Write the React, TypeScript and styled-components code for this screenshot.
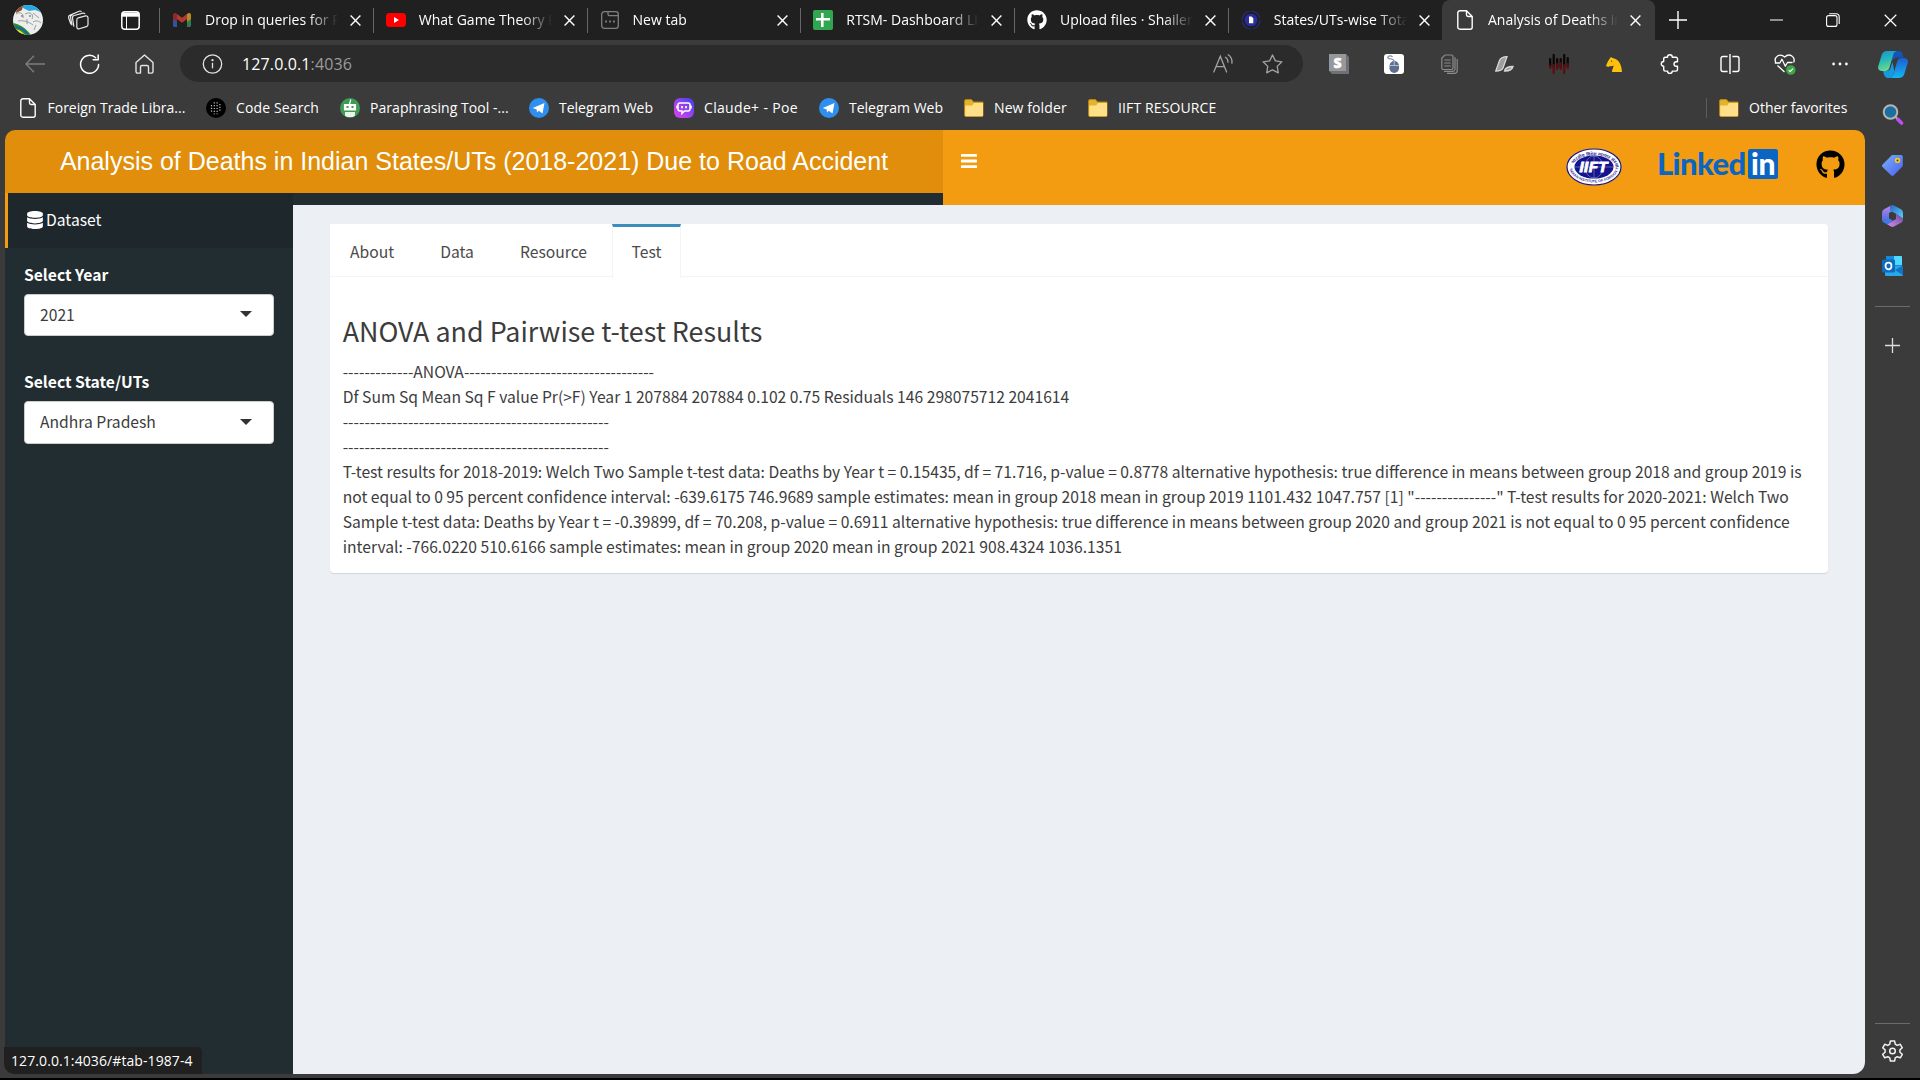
import React from "react";
import styled, { createGlobalStyle } from "styled-components";
import { FaGithub, FaDatabase } from "react-icons/fa";

const UI = `"Open Sans", "Noto Sans", sans-serif`;
const CONTENT = `"Noto Sans CJK SC", "Noto Sans", sans-serif`;

const Global = createGlobalStyle`
  * { box-sizing: border-box; }
  html, body { margin: 0; padding: 0; background: #000; overflow: hidden; }
  svg { display: block; flex: none; }
`;

const Frame = styled.div`
  width: 1920px;
  height: 1080px;
  display: flex;
  flex-direction: column;
  background: #3b3b3b;
  border-bottom: 2px solid #000;
  font-family: ${UI};
  color: #fff;
  overflow: hidden;
`;

/* ---------- tab strip ---------- */
const TabStrip = styled.div`
  height: 40px;
  flex: none;
  display: flex;
  background: #202020;
`;
const StripLead = styled.div`
  width: 159px;
  flex: none;
  display: flex;
  align-items: center;
  padding-left: 13px;
`;
const Avatar = styled.div`
  width: 30px;
  height: 30px;
  border-radius: 50%;
  overflow: hidden;
  margin-right: 24px;
`;
const LeadIcon = styled.div<{ $gap?: number }>`
  margin-right: ${(p) => p.$gap ?? 0}px;
`;
const Tab = styled.div<{ $active?: boolean }>`
  width: 213.75px;
  flex: none;
  height: 40px;
  display: flex;
  align-items: center;
  padding: 0 ${(p) => (p.$active ? 14 : 12)}px 0 ${(p) => (p.$active ? 12.5 : 12)}px;
  background: ${(p) => (p.$active ? "#3b3b3b" : "transparent")};
  border-radius: 8px 8px 0 0;
`;
const TabRule = styled.div<{ $hidden?: boolean }>`
  width: 1px;
  height: 25px;
  margin: 0 0 0 -12px;
  background: ${(p) => (p.$hidden ? "transparent" : "#666")};
`;
const TabIcon = styled.div`
  width: 20px;
  height: 20px;
  flex: none;
  margin: 0 13px 0 12px;
  display: flex;
  align-items: center;
  justify-content: center;
`;
const TabTitle = styled.div`
  flex: 1;
  min-width: 0;
  font-size: 14px;
  line-height: 20px;
  white-space: nowrap;
  overflow: hidden;
  mask-image: linear-gradient(90deg, #000 calc(100% - 30px), transparent);
`;
const TabClose = styled.div`
  width: 11px;
  flex: none;
  margin: 1px 0 0 12px;
`;
const NewTab = styled.div`
  width: 45px;
  display: flex;
  align-items: center;
  justify-content: center;
`;
const WindowButtons = styled.div`
  margin-left: auto;
  display: flex;
`;
const WindowButton = styled.div`
  width: 57.2px;
  padding-right: 1.5px;
  display: flex;
  align-items: center;
  justify-content: center;
`;

/* ---------- body ---------- */
const Body = styled.div`
  flex: 1;
  display: flex;
  min-height: 0;
`;
const MainColumn = styled.div`
  width: 1865px;
  flex: none;
  display: flex;
  flex-direction: column;
`;
const Toolbar = styled.div`
  height: 48px;
  flex: none;
  display: flex;
  align-items: center;
  padding-left: 7px;
`;
const ToolCell = styled.div`
  width: 55px;
  flex: none;
  display: flex;
  justify-content: center;
  align-items: center;
`;
const AddressBar = styled.div`
  width: 1123px;
  height: 37px;
  margin: -1px 8.5px 0 8px;
  border-radius: 19px;
  background: #2b2b2b;
  display: flex;
  align-items: center;
  padding: 0 20px 0 22px;
  flex: none;
`;
const Url = styled.div`
  margin-left: 19px;
  flex: 1;
  font-size: 16px;
  line-height: 24px;
  letter-spacing: 0.12px;
  color: #9b9b9b;
  b { font-weight: 400; color: #fff; }
`;
const StarSlot = styled.div`
  margin-left: 29px;
`;
const ToolRule = styled.div`
  width: 1px;
  height: 20px;
  background: #636363;
  margin: 0 3.5px 0 2px;
`;

const Favorites = styled.div`
  height: 42px;
  flex: none;
  display: flex;
  align-items: center;
  padding: 0 0 2px 20px;
`;
const Fav = styled.div<{ $w: number; $ls?: number; $gap?: number }>`
  width: ${(p) => p.$w}px;
  flex: none;
  display: flex;
  align-items: center;
  gap: ${(p) => p.$gap ?? 10}px;
  font-size: 14px;
  line-height: 20px;
  white-space: nowrap;
  letter-spacing: ${(p) => p.$ls ?? 0}px;
`;
const FavRule = styled.div`
  width: 1px;
  height: 20px;
  background: #5c5c5c;
  margin: 0 12px 0 auto;
`;

/* ---------- edge side bar ---------- */
const EdgeBar = styled.div`
  flex: 1;
  display: flex;
  flex-direction: column;
  align-items: center;
`;
const EdgeItem = styled.div<{ $h: number }>`
  height: ${(p) => p.$h}px;
  flex: none;
  display: flex;
  align-items: center;
  justify-content: center;
`;
const EdgeRule = styled.div`
  width: 35px;
  height: 1px;
  background: #6b6b6b;
  flex: none;
`;
const EdgeSpacer = styled.div`
  flex: 1;
`;

/* ---------- dashboard ---------- */
const Page = styled.div`
  margin-left: 5px;
  height: 944px;
  flex: none;
  border-radius: 10px 10px 12px 12px;
  overflow: hidden;
  background: #222d32;
  display: flex;
  flex-direction: column;
  font-family: ${CONTENT};
`;
const Header = styled.div`
  height: 75px;
  flex: none;
  display: flex;
`;
const Brand = styled.div`
  width: 938px;
  height: 63px;
  flex: none;
  background: #e08e0b;
  font: 25px/62px "Liberation Sans", Arial, sans-serif;
  text-align: center;
  white-space: nowrap;
`;
const Navbar = styled.div`
  flex: 1;
  background: #f39c12;
  display: flex;
  padding: 18px 20px 0 18px;
`;
const MenuToggle = styled.div`
  padding-top: 6px;
  width: 604.5px;
`;
const LinkedInMark = styled.div`
  display: flex;
  margin: 1px 0 0 35.5px;
  font-family: Lato, sans-serif;
  font-weight: 900;
  font-size: 31px;
  line-height: 28px;
  color: #0a66c2;
`;
const LinkedWord = styled.span`
  width: 91px;
  letter-spacing: -0.6px;
  white-space: nowrap;
`;
const InBox = styled.span`
  width: 30px;
  height: 30px;
  border-radius: 2.5px;
  background: #0a66c2;
  color: #fff;
  text-align: center;
  letter-spacing: -0.5px;
  font-size: 30px;
`;
const GithubSlot = styled.div`
  margin: 1.5px 0 0 38px;
`;

const Work = styled.div`
  flex: 1;
  display: flex;
  align-items: flex-start;
`;
const SideBar = styled.div`
  width: 288px;
  flex: none;
  margin-top: -12px;
`;
const SideItem = styled.div`
  height: 55px;
  background: #1e282c;
  border-left: 3px solid #f39c12;
  display: flex;
  align-items: center;
  gap: 2px;
  padding: 0 0 2px 18px;
  font-size: 15.67px;
`;
const Field = styled.div<{ $top: number }>`
  padding: ${(p) => p.$top}px 19px 0;
`;
const FieldLabel = styled.div`
  font-weight: 700;
  font-size: 15.67px;
  line-height: 25px;
  margin-bottom: 7px;
`;
const Select = styled.div<{ $h: number }>`
  height: ${(p) => p.$h}px;
  background: #fff;
  border: 1px solid #ccc;
  border-radius: 4px;
  color: #3c3c3c;
  display: flex;
  align-items: center;
  justify-content: space-between;
  padding: 0 21px 2px 15px;
  font-size: 15.67px;
  line-height: 25px;
`;
const Caret = styled.div`
  border: 6px solid transparent;
  border-top-color: #333;
  border-bottom: 0;
`;
const Content = styled.div`
  flex: 1;
  align-self: stretch;
  background: #ecf0f5;
  padding: 19px 37px 0;
`;
const TabBox = styled.div`
  background: #fff;
  border-radius: 4px;
  height: 349px;
  box-shadow: 0 1px 1px rgba(0, 0, 0, 0.12);
  color: #3c3c3c;
`;
const NavTabs = styled.div`
  height: 53px;
  display: flex;
  border-bottom: 1px solid #f4f4f4;
`;
const NavTab = styled.div<{ $w: number; $active?: boolean }>`
  width: ${(p) => p.$w}px;
  height: ${(p) => (p.$active ? 54 : 52)}px;
  text-align: center;
  font-size: 15.67px;
  line-height: 25px;
  padding-top: ${(p) => (p.$active ? 12 : 15)}px;
  border-top: ${(p) => (p.$active ? "3px solid #3c8dbc" : "0")};
  border-left: 1px solid ${(p) => (p.$active ? "#f4f4f4" : "transparent")};
  border-right: 1px solid ${(p) => (p.$active ? "#f4f4f4" : "transparent")};
  background: #fff;
  color: #4a4a4a;
`;
const TabGap = styled.div`
  width: 5px;
`;
const Pane = styled.div`
  padding: 35px 13px 0 12.7px;
`;
const Title = styled.h3`
  margin: 0 0 9px;
  font-weight: 400;
  font-size: 26.86px;
  line-height: 38px;
`;
const Line = styled.div`
  font-size: 15.67px;
  line-height: 25px;
  white-space: nowrap;
  width: max-content;
`;
const StatusBubble = styled.div`
  position: absolute;
  left: 4px;
  top: 1047px;
  width: 198px;
  height: 27px;
  border-radius: 0 5px 0 10px;
  background: #202020;
  padding-left: 7px;
  font-size: 14px;
  line-height: 27px;
  letter-spacing: 0.09px;
  white-space: nowrap;
`;

/* ---------- icons ---------- */
const X = ({ s = 11, w = 1.4 }: { s?: number; w?: number }) => (
  <svg width={s} height={s} viewBox="0 0 11 11" stroke="#fff" strokeWidth={w}><path d="M.6.6 10.4 10.4M10.4.6.6 10.4" /></svg>
);
const PageIcon = () => (
  <svg width="16" height="20" viewBox="0 0 16 20" fill="none" stroke="#fff" strokeWidth="1.4" strokeLinejoin="round">
    <path d="M3 .8h6.500L15.200 6.500V17.200a2 2 0 0 1-2 2H2.800a2 2 0 0 1-2-2V2.800a2 2 0 0 1 2-2zM9.500.8v4a1.700 1.700 0 0 0 1.700 1.700h4" />
  </svg>
);
const AvatarArt = () => (
  <svg width="30" height="30" viewBox="0 0 30 30">
    <rect width="30" height="30" fill="#eceeee" />
    <path d="M8 0h18l4 8-8-3-6 1-6-3z" fill="#28a8e0" /><path d="M4 0h6l-1 5-6 3z" fill="#8a4a30" />
    <path d="M0 18c6 1 12 4 18 12H0z" fill="#2f8a2a" /><path d="M0 24c5 0 9 2 12 6H0z" fill="#f1e32a" />
    <path d="M0 22c6 0 12 3 15 8" stroke="#185cc0" strokeWidth="1.5" fill="none" />
    <path d="M3 9c4-3 8 0 7 4M12 9c6-3 9 1 7 5M5 16c6-1 11 1 15 4M20 8l6 5M20 17c3-2 6-1 8 1M14 14v5M23 20l-2 5" stroke="#888" strokeWidth=".8" fill="none" />
    <circle cx="9" cy="11" r=".8" fill="#444" /><circle cx="17" cy="11" r=".8" fill="#444" />
  </svg>
);
const Workspaces = () => (
  <svg width="22" height="20" viewBox="0 0 22 20" fill="none" stroke="#e8e8e8" strokeWidth="1.2" strokeLinejoin="round" strokeLinecap="round">
    <path d="M11.300 7.800 18.500 5.900A2 2 0 0 1 21 7.800v6.700a2.200 2.200 0 0 1-1.600 2.100l-7.100 2.200a2 2 0 0 1-2.500-1.900V9.900a2.200 2.200 0 0 1 1.500-2.100z" />
    <path d="M6.800 16.200 5.500 8.200a2.400 2.400 0 0 1 1.700-2.700l8.600-2.300a2 2 0 0 1 2 .5M3.800 14 1.700 8a2.400 2.400 0 0 1 1.500-2.900l9-3.900a2 2 0 0 1 2 .2M4.900 14.800 3.600 7.700a2.400 2.400 0 0 1 1.600-2.700" />
  </svg>
);
const TabActions = () => (
  <svg width="19" height="19" viewBox="0 0 19 19" fill="none" stroke="#fff" strokeWidth="1.5">
    <rect x=".8" y=".8" width="17.4" height="17.4" rx="3" /><path d="M1 1.5h17v4.2H1z" fill="#fff" stroke="none" /><path d="M5.500 5v13" strokeWidth="1" />
  </svg>
);
const Gmail = () => (
  <svg width="18" height="14" viewBox="0 0 18 14">
    <path d="M0 2v10.800c0 .7.5 1.200 1.200 1.200H4V5z" fill="#33549a" /><path d="M18 2v10.800c0 .7-.5 1.200-1.200 1.200H14V5z" fill="#2f7d48" />
    <path d="M0 2C0 .2 1.800-.6 3.200.4L4 1v8L0 6z" fill="#8c2b2b" /><path d="M4 1v5l5 3.800L14 6V1L9 4.800z" fill="#b13a32" />
    <path d="M18 2c0-1.800-1.800-2.600-3.200-1.600L14 1v8l4-3z" fill="#b98a24" />
  </svg>
);
const YouTube = () => (
  <svg width="20" height="14" viewBox="0 0 20 14"><rect width="20" height="14" rx="3.4" fill="#f00" /><path d="M8 4v6l5-3z" fill="#fff" /></svg>
);
const NewTabIcon = () => (
  <svg width="18" height="18" viewBox="0 0 18 18" fill="none" stroke="#7f7f7f" strokeWidth="1.300">
    <rect x=".7" y=".7" width="16.600" height="16.600" rx="2.600" /><path d="M7 1v2a1.700 1.700 0 0 0 1.700 1.700H17" />
    <path d="M4.200 10.500h1.800M8.100 10.500h1.800M12 10.500h1.800" strokeWidth="1.800" />
  </svg>
);
const Sheets = () => (
  <svg width="20" height="20" viewBox="0 0 20 20"><rect width="20" height="20" rx="2" fill="#31a650" /><path d="M8 3h2.600v5H17v2.600h-6.400V17H8v-6.400H3V8h5z" fill="#fff" /></svg>
);
const StatesLogo = () => (
  <svg width="20" height="20" viewBox="0 0 20 20" fill="none">
    <circle cx="10" cy="10" r="9" stroke="#2a2a86" strokeWidth="1.200" strokeDasharray="12 2.100" /><circle cx="10" cy="10" r="6.300" fill="#2c2c9e" />
    <path d="M8 6.500h2.500L12.300 8.300v4.900H8z" fill="#fff" />
  </svg>
);
const Plus = ({ s, w, c = "#fff" }: { s: number; w: number; c?: string }) => (
  <svg width={s} height={s} viewBox={`0 0 ${s} ${s}`} stroke={c} strokeWidth={w}><path d={`M${s / 2} 0V${s}M0 ${s / 2}H${s}`} /></svg>
);
const Restore = () => (
  <svg width="14" height="14" viewBox="0 0 14 14" fill="none" stroke="#fff" strokeWidth="1.100"><rect x=".6" y="2.600" width="10.400" height="10.800" rx="2" /><path d="M3.200.8h6.800a3.200 3.200 0 0 1 3.200 3.200v7" /></svg>
);
const Back = () => (
  <svg width="20" height="18" viewBox="0 0 20 18" fill="none" stroke="#7d7d7d" strokeWidth="1.400"><path d="M20 9H1M9 .8.900 9 9 17.200" /></svg>
);
const Refresh = () => (
  <svg width="21" height="20" viewBox="0 0 21 20" fill="none" stroke="#fff" strokeWidth="1.500" strokeLinecap="round" strokeLinejoin="round"><path d="M19.600 10.500a9 9 0 1 1-2.900-6.800M19.200.9v4.900h-5" /></svg>
);
const HomeIcon = () => (
  <svg width="19" height="20" viewBox="0 0 19 20" fill="none" stroke="#e4e4e4" strokeWidth="1.400" strokeLinejoin="round"><path d="M1 8.400 9.500.9 18 8.400V17.600a1.500 1.500 0 0 1-1.500 1.500h-3V13a1.500 1.500 0 0 0-1.500-1.500H7A1.500 1.500 0 0 0 5.500 13v6.100h-3A1.500 1.500 0 0 1 1 17.600z" /></svg>
);
const Info = () => (
  <svg width="21" height="20" viewBox="0 0 20 20" fill="none" stroke="#e4e4e4" strokeWidth="1.300"><circle cx="10" cy="10" r="9.200" /><path d="M10 8.800v5.500" /><circle cx="10" cy="6.200" r=".5" fill="#e4e4e4" /></svg>
);
const ReadAloud = () => (
  <svg width="20" height="19" viewBox="0 0 20 19" fill="none" stroke="#a3a3a3" strokeWidth="1.300" strokeLinecap="round"><path d="M.800 18 7.300 2.200 13.600 18M3 12.700h8.600M12.500 3.200c1.700 1 2.600 2.800 2.500 5M15.200.8c2.800 1.900 4.100 5 3.700 8.400" /></svg>
);
const Star = () => (
  <svg width="21" height="20" viewBox="0 0 21 20" fill="none" stroke="#a3a3a3" strokeWidth="1.300" strokeLinejoin="round"><path d="M10.500 1 13.400 6.900 19.900 7.800 15.200 12.400 16.300 18.800 10.500 15.800 4.700 18.800 5.800 12.400 1.100 7.800 7.600 6.900z" /></svg>
);
const SCube = () => (
  <svg width="20" height="20" viewBox="0 0 20 20"><path d="M0 0h17l3 3v17H3l-3-3z" fill="#6f7175" /><rect width="17" height="17" fill="#96989c" /><text x="8.500" y="13.600" fontSize="14" fontWeight="800" fontFamily="Open Sans" fill="#fff" stroke="#fff" strokeWidth=".5" textAnchor="middle">S</text></svg>
);
const MouseIcon = () => (
  <svg width="20" height="20" viewBox="0 0 20 20"><rect width="20" height="20" rx="3" fill="#fff" /><path d="M10.200 8C10.500 3.500 4.500 6 3.700 3.800 3.800 1.500 7.500 1.200 8.500 3" stroke="#8391a5" fill="none" strokeWidth="1.200" /><rect x="5.500" y="7" width="9.500" height="12" rx="4.700" fill="#5c6f8e" /><path d="M5.500 11.500h9.500M10.200 7v4" stroke="#dfe5ee" strokeWidth=".7" /></svg>
);
const Docs = () => (
  <svg width="17" height="20" viewBox="0 0 17 20" fill="none" stroke="#8b8b8b" strokeWidth="1.200"><path d="M4 1h6.500A1.500 1.500 0 0 1 12 2.500V14a1.500 1.500 0 0 1-1.500 1.500H2.300A1.500 1.500 0 0 1 .8 14V4zM14 3.200V15a2.300 2.300 0 0 1-2.300 2.300H3M16.200 5v11.500a2.800 2.800 0 0 1-2.800 2.800H6M3.200 6h6.500M3.200 9h6.500M3.200 12h6.500" /></svg>
);
const LeafMark = () => (
  <svg width="19" height="16" viewBox="0 0 19 16" fill="#9d9d9d" stroke="#d8d8d8" strokeWidth="1.300"><path d="M.8 15 4.500 4.500C5.500 2 8 .8 12 .7L8 12c-.9 2.300-3.200 3-7.200 3zM9.500 15c.6-3 3-4.500 8.500-4.500-1 3.500-3.500 4.700-8.500 4.500z" /></svg>
);
const Wave = () => (
  <svg width="20" height="20" viewBox="0 0 20 20" strokeWidth="2.200" strokeLinecap="round">
    <path d="M1.200 5v8M4.700 1v12M8.200 5v8M11.700 5v8M15.200 1v12M18.700 4v8" stroke="#0c0606" />
    <path d="M1.200 12v2M4.700 11v8M8.200 10v5M11.700 9v6M15.200 11v8M18.700 10v4" stroke="#5c0d10" />
  </svg>
);
const Knight = () => (
  <svg width="16" height="15" viewBox="0 0 16 15" fill="#fcc00d"><path d="M5 0l1.500 1C11.500 1.500 15.500 6 16 15H6c0-3 1.500-4.500 1.600-6.500C5.500 9.800 4 8.500 2.200 10L0 9C1 6 2.300 3 5 0z" /><circle cx="5.600" cy="4.200" r=".6" fill="#3b3b3b" /></svg>
);
const Puzzle = () => (
  <svg width="19" height="20" viewBox="0 0 19 20" fill="none" stroke="#fff" strokeWidth="1.400" strokeLinejoin="round"><path d="M7.500 3.200a2.400 2.400 0 0 1 4.800 0h3.700a1.500 1.500 0 0 1 1.500 1.500v3h-1.200a2.300 2.300 0 0 0 0 4.600h1.200v3.300a1.500 1.500 0 0 1-1.500 1.500h-3.700a2.400 2.400 0 0 1-4.800 0H5.200a1.500 1.500 0 0 1-1.500-1.500v-3.300a2.400 2.400 0 0 1 0-4.800v-2.800a1.500 1.500 0 0 1 1.500-1.500z" /></svg>
);
const Split = () => (
  <svg width="20" height="20" viewBox="0 0 20 20" fill="none" stroke="#fff" strokeWidth="1.400"><path d="M7.600 2.500H3A2 2 0 0 0 1 4.500v11a2 2 0 0 0 2 2h4.600M12.400 2.500H17a2 2 0 0 1 2 2v11a2 2 0 0 1-2 2h-4.600M10 0v20" /></svg>
);
const Heart = () => (
  <svg width="22" height="21" viewBox="0 0 22 21" fill="none" stroke="#fff" strokeWidth="1.300" strokeLinejoin="round">
    <path d="M1.700 8.500C-.5 3 5.800-1.500 10.700 3 15.500-1.500 22 3 19.600 8.500M3.500 11.500 10.500 18M.8 9h5l2.200-3.800 3.300 7L13.500 8.500h5" />
    <circle cx="16.800" cy="16" r="4.800" fill="#3fa648" stroke="none" /><path d="M14.700 16.100l1.500 1.500 2.700-3" strokeWidth="1.100" />
  </svg>
);
const Dots = () => (
  <svg width="16" height="4" viewBox="0 0 16 4" fill="#fff"><circle cx="1.600" cy="2" r="1.400" /><circle cx="8" cy="2" r="1.400" /><circle cx="14.400" cy="2" r="1.400" /></svg>
);
const Copilot = () => (
  <svg width="30" height="27" viewBox="0 0 30 27">
    <defs>
      <linearGradient id="cpa" x1="0" y1="0" x2=".3" y2="1"><stop offset="0" stopColor="#1e8fd6" /><stop offset=".5" stopColor="#25b7b9" /><stop offset="1" stopColor="#6fd98a" /></linearGradient>
      <linearGradient id="cpb" x1="0" y1="0" x2="0" y2="1"><stop offset="0" stopColor="#1b5fd0" /><stop offset="1" stopColor="#17b4f5" /></linearGradient>
    </defs>
    <path d="M17 0h4c2 0 3 1 3.600 3l1 3.500h-6c-3 0-4.500 1.500-5.300 4L12 3z" fill="#1554b8" />
    <path d="M9 0h9.500c-2 .8-2.800 2-3.500 4.500l-3.500 12c-.7 2.400-2 3.500-4.500 3.500H4c-3 0-4.500-2-3.700-5L3.500 4.500C4.400 1.500 6 0 9 0z" fill="url(#cpa)" />
    <path d="M20.500 27H12c2.300-1 3-2.200 3.700-4.500l3.500-12c.7-2.400 2-3.500 4.500-3.500H26c3 0 4.500 2 3.700 5L26.500 22.500c-.9 3-3 4.500-6 4.500z" fill="url(#cpb)" />
    <path d="M5 20h3c2.500 0 4-1 4.700-3.500L14.500 11l1.800 9-1 3.500C14.500 26 13.500 27 12 27h-2C7.500 27 6 25 5 20z" fill="#1699dd" />
  </svg>
);
const CodeSearch = () => (
  <svg width="20" height="20" viewBox="0 0 20 20"><circle cx="10" cy="10" r="10" fill="#000" /><g stroke="#bbb" strokeWidth="1.200" strokeDasharray="1.200 1.600"><path d="M5.500 7v7M8.300 4.300v12M11.100 4.300v12M13.900 6v8" /></g></svg>
);
const Robot = () => (
  <svg width="20" height="20" viewBox="0 0 20 20"><circle cx="10" cy="10" r="10" fill="#3f9a53" /><path d="M9.400 6.500 10.800 1.500M4.500 6.500h11v5.500h-11z" stroke="#fff" strokeWidth="1.200" fill="#fff" /><path d="M6.500 8h2v2h-2zM11.500 8h2v2h-2z" fill="#3f9a53" /><path d="M5 14h10v3.500l-2 1.500H7l-2-1.500z" fill="#e8f5ea" /></svg>
);
const Telegram = () => (
  <svg width="20" height="20" viewBox="0 0 20 20"><circle cx="10" cy="10" r="10" fill="#2f8fee" /><path d="M3.800 10 15.500 5l-2 10.500L9.800 12.800 8 14.600 7.700 11.500z" fill="#fff" /></svg>
);
const Poe = () => (
  <svg width="20" height="20" viewBox="0 0 20 20"><defs><linearGradient id="poe" x1="0" y1="1" x2="1" y2="0"><stop offset="0" stopColor="#e03ff0" /><stop offset=".5" stopColor="#9a42ef" /><stop offset="1" stopColor="#3c3ff0" /></linearGradient></defs><rect width="20" height="20" rx="6" fill="url(#poe)" /><path d="M6 5h8a2 2 0 0 1 2 2v4a2 2 0 0 1-2 2h-3.500L8 15.500V13H6a2 2 0 0 1-2-2V7a2 2 0 0 1 2-2zM3 7.500v3M17 7.500v3" fill="none" stroke="#fff" strokeWidth="1.500" /><path d="M8 8v2.200M12 8v2.200" stroke="#fff" strokeWidth="1.700" /></svg>
);
const Folder = () => (
  <svg width="20" height="18" viewBox="0 0 20 18"><path d="M.6 2A1.400 1.400 0 0 1 2 .6h5.500L9.500 3H19v13.400a1 1 0 0 1-1 1H1.600a1 1 0 0 1-1-1z" fill="#e5b22e" stroke="#b98710" strokeWidth="1" /><path d="M1.200 6.500h7L10 4h9v12.300a.9.900 0 0 1-.9.900H2a.9.900 0 0 1-.8-.9z" fill="#ffdf87" /></svg>
);
const SearchIcon = () => (
  <svg width="22" height="21" viewBox="0 0 22 21"><path d="M13.500 13 16 15.500" stroke="#b4b4b4" strokeWidth="2" /><path d="M16 15.500 19.500 19" stroke="#c44cf8" strokeWidth="3.600" strokeLinecap="round" /><circle cx="8.500" cy="8" r="6.800" fill="#1a6f9f" stroke="#b4b4b4" strokeWidth="2" /></svg>
);
const Tag = () => (
  <svg width="21" height="21" viewBox="0 0 21 21"><defs><linearGradient id="tg" x1="0" y1="0" x2="1" y2="1"><stop offset="0" stopColor="#7ab2f7" /><stop offset="1" stopColor="#4a5ff0" /></linearGradient></defs><path d="M10 0h9a1.800 1.800 0 0 1 1.800 1.800v8.500a2 2 0 0 1-.6 1.400l-8.400 8.600a2 2 0 0 1-2.800 0L.6 12a1.800 1.800 0 0 1 0-2.600z" fill="url(#tg)" /><circle cx="15.500" cy="5.400" r="2.700" fill="#f6cc16" /><circle cx="15.500" cy="5.400" r="1" fill="#3a3a60" /></svg>
);
const M365 = () => (
  <svg width="21" height="22" viewBox="0 0 21 22"><defs><linearGradient id="ma" x1="0" y1="0" x2="0" y2="1"><stop offset="0" stopColor="#c084e8" /><stop offset="1" stopColor="#3f6ddd" /></linearGradient><linearGradient id="mb" x1="0" y1="0" x2="1" y2="1"><stop offset="0" stopColor="#2a66c8" /><stop offset="1" stopColor="#5bd0f5" /></linearGradient><linearGradient id="mc" x1="0" y1="1" x2="1" y2="0"><stop offset="0" stopColor="#d58bf3" /><stop offset="1" stopColor="#6b4c98" /></linearGradient></defs>
    <path d="M9 .4 2 4.300Q0 5.500 0 8v7q0 1.500 1.500 2.400L7 17V8l3.500-2z" fill="url(#ma)" /><path d="M9 .4q1.500-.8 3 0L19 4.300Q21 5.500 21 8v5.500L14 9 8 6V1z" fill="url(#mb)" /><path d="M21 13.500v1q0 2-1.500 3L12 21.500q-1.500.8-3 0L5 19.200l9-5.200V9z" fill="url(#mc)" /><path d="M1.500 17.400 5 19.200 11 15.800 7 13z" fill="#3f7ae6" /><path d="M10.500 7 14 9v4l-3.500 2L7 13V9z" fill="#3b3b3b" />
  </svg>
);
const Outlook = () => (
  <svg width="21" height="20" viewBox="0 0 21 20"><path d="M4 0h15a1 1 0 0 1 1 1v10H4z" fill="#1a86d8" /><path d="M12 0h7a1 1 0 0 1 1 1v8h-8z" fill="#50d9ff" /><path d="M3 9.500 21 10v9a1 1 0 0 1-1 1H4a1 1 0 0 1-1-1z" fill="#28a8ea" /><path d="M21 9.500v9.700L13 14z" fill="#1272bf" /><rect y="3.500" width="13" height="13" rx="1.200" fill="#0f6cbd" /><ellipse cx="6.500" cy="10" rx="3" ry="3.300" fill="none" stroke="#fff" strokeWidth="1.700" /></svg>
);
const Gear = () => (
  <svg width="21" height="22" viewBox="0 0 21 22" fill="none" stroke="#f0f0f0" strokeWidth="1.500" strokeLinejoin="round"><path d="M8.400 1h4.200l.6 3.200 2 1.200 3.100-1.100 2 3.500-2.400 2.100v2.300l2.400 2.100-2 3.500-3.100-1.100-2 1.200-.6 3.100H8.400l-.6-3.100-2-1.200-3.100 1.100-2-3.500 2.400-2.100V9.900L.7 7.800l2-3.500 3.100 1.100 2-1.200z" /><circle cx="10.500" cy="11" r="2.800" /></svg>
);
const Burger = () => (
  <svg width="16" height="14" viewBox="0 0 16 14" fill="#fff"><rect width="16" height="2.800" rx=".6" /><rect y="5.600" width="16" height="2.800" rx=".6" /><rect y="11.200" width="16" height="2.800" rx=".6" /></svg>
);
const Iift = () => (
  <svg width="56" height="38" viewBox="0 0 56 38">
    <defs><path id="arcTop" d="M6.500 20A21.500 12.500 0 0 1 49.500 20" /><path id="arcBottom" d="M3.500 19A24.500 15.500 0 0 0 52.500 19" /></defs>
    <ellipse cx="28" cy="19" rx="27" ry="18" fill="#fff" stroke="#17178c" strokeWidth="1.200" />
    <ellipse cx="28" cy="19" rx="19.500" ry="11.500" fill="#14148c" />
    <ellipse cx="28" cy="19" rx="9" ry="11" fill="none" stroke="#8d8dd0" strokeWidth=".6" /><path d="M9 19h38M28 8v22" stroke="#8d8dd0" strokeWidth=".6" />
    <text fontSize="4.600" fontWeight="700" fontFamily="Noto Sans, sans-serif" fill="#3b3b9c"><textPath href="#arcTop" startOffset="4">भारतीय विदेश व्यापार संस्थान</textPath></text>
    <text fontSize="3.700" fontWeight="700" fontFamily="Liberation Sans" fill="#3b3b9c"><textPath href="#arcBottom" startOffset="2">INDIAN INSTITUTE OF FOREIGN TRADE</textPath></text>
    <text x="27.500" y="24.300" fontSize="15" fontWeight="700" fontStyle="italic" fontFamily="Liberation Sans" fill="#fff" stroke="#fff" strokeWidth=".9" textAnchor="middle" textLength="28">IIFT</text>
  </svg>
);

const tabs = [
  { icon: <Gmail />, title: "Drop in queries for R" },
  { icon: <YouTube />, title: "What Game Theory R" },
  { icon: <NewTabIcon />, title: "New tab" },
  { icon: <Sheets />, title: "RTSM- Dashboard Li" },
  { icon: <FaGithub size={20} color="#fff" />, title: "Upload files · Shailen" },
  { icon: <StatesLogo />, title: "States/UTs-wise Total" },
  { icon: <PageIcon />, title: "Analysis of Deaths in", active: true },
];
const favorites = [
  { icon: <PageIcon />, label: "Foreign Trade Libra...", w: 186, gap: 11.5 },
  { icon: <CodeSearch />, label: "Code Search", w: 134, ls: 0.13 },
  { icon: <Robot />, label: "Paraphrasing Tool -...", w: 189, ls: 0.05 },
  { icon: <Telegram />, label: "Telegram Web", w: 145 },
  { icon: <Poe />, label: "Claude+ - Poe", w: 145, ls: 0.33 },
  { icon: <Telegram />, label: "Telegram Web", w: 145 },
  { icon: <Folder />, label: "New folder", w: 124, ls: 0.1 },
  { icon: <Folder />, label: "IIFT RESOURCE", w: 140, ls: 0.12 },
];
const lines = [
  "-------------ANOVA-----------------------------------",
  "Df Sum Sq Mean Sq F value Pr(>F) Year 1 207884 207884 0.102 0.75 Residuals 146 298075712 2041614",
  "-------------------------------------------------",
  "-------------------------------------------------",
  "T-test results for 2018-2019: Welch Two Sample t-test data: Deaths by Year t = 0.15435, df = 71.716, p-value = 0.8778 alternative hypothesis: true difference in means between group 2018 and group 2019 is",
  'not equal to 0 95 percent confidence interval: -639.6175 746.9689 sample estimates: mean in group 2018 mean in group 2019 1101.432 1047.757 [1] "---------------" T-test results for 2020-2021: Welch Two',
  "Sample t-test data: Deaths by Year t = -0.39899, df = 70.208, p-value = 0.6911 alternative hypothesis: true difference in means between group 2020 and group 2021 is not equal to 0 95 percent confidence",
  "interval: -766.0220 510.6166 sample estimates: mean in group 2020 mean in group 2021 908.4324 1036.1351",
];

export default function App() {
  return (
    <Frame>
      <Global />
      <TabStrip>
        <StripLead>
          <Avatar><AvatarArt /></Avatar>
          <LeadIcon $gap={32}><Workspaces /></LeadIcon>
          <LeadIcon><TabActions /></LeadIcon>
        </StripLead>
        {tabs.map((t, i) => (
          <Tab key={i} $active={t.active}>
            <TabRule $hidden={t.active} />
            <TabIcon>{t.icon}</TabIcon>
            <TabTitle>{t.title}</TabTitle>
            <TabClose><X /></TabClose>
          </Tab>
        ))}
        <NewTab><Plus s={18} w={1.4} /></NewTab>
        <WindowButtons>
          <WindowButton><svg width="13" height="2"><path d="M0 1h13" stroke="#fff" /></svg></WindowButton>
          <WindowButton><Restore /></WindowButton>
          <WindowButton><X s={13} w={1} /></WindowButton>
        </WindowButtons>
      </TabStrip>
      <Body>
        <MainColumn>
          <Toolbar>
            <ToolCell><Back /></ToolCell>
            <ToolCell><Refresh /></ToolCell>
            <ToolCell><HomeIcon /></ToolCell>
            <AddressBar>
              <Info />
              <Url><b>127.0.0.1</b>:4036</Url>
              <ReadAloud />
              <StarSlot><Star /></StarSlot>
            </AddressBar>
            <ToolCell><SCube /></ToolCell>
            <ToolCell><MouseIcon /></ToolCell>
            <ToolCell><Docs /></ToolCell>
            <ToolCell><LeafMark /></ToolCell>
            <ToolCell><Wave /></ToolCell>
            <ToolCell><Knight /></ToolCell>
            <ToolCell><Puzzle /></ToolCell>
            <ToolRule />
            <ToolCell><Split /></ToolCell>
            <ToolCell><Heart /></ToolCell>
            <ToolCell><Dots /></ToolCell>
          </Toolbar>
          <Favorites>
            {favorites.map((f, i) => (
              <Fav key={i} $w={f.w} $gap={f.gap} $ls={f.ls}>{f.icon}{f.label}</Fav>
            ))}
            <FavRule />
            <Fav $w={146}><Folder />Other favorites</Fav>
          </Favorites>
          <Page>
            <Header>
              <Brand>Analysis of Deaths in Indian States/UTs (2018-2021) Due to Road Accident</Brand>
              <Navbar>
                <MenuToggle><Burger /></MenuToggle>
                <Iift />
                <LinkedInMark><LinkedWord>Linked</LinkedWord><InBox>in</InBox></LinkedInMark>
                <GithubSlot><FaGithub size={29} color="#000" /></GithubSlot>
              </Navbar>
            </Header>
            <Work>
              <SideBar>
                <SideItem><FaDatabase size={18} />Dataset</SideItem>
                <Field $top={14}>
                  <FieldLabel>Select Year</FieldLabel>
                  <Select $h={42}>2021<Caret /></Select>
                </Field>
                <Field $top={33}>
                  <FieldLabel>Select State/UTs</FieldLabel>
                  <Select $h={43}>Andhra Pradesh<Caret /></Select>
                </Field>
              </SideBar>
              <Content>
                <TabBox>
                  <NavTabs>
                    <NavTab $w={84}>About</NavTab>
                    <NavTab $w={86}>Data</NavTab>
                    <NavTab $w={107}>Resource</NavTab>
                    <TabGap />
                    <NavTab $w={69} $active>Test</NavTab>
                  </NavTabs>
                  <Pane>
                    <Title>ANOVA and Pairwise t-test Results</Title>
                    {lines.map((l, i) => <Line key={i}>{l}</Line>)}
                  </Pane>
                </TabBox>
              </Content>
            </Work>
          </Page>
        </MainColumn>
        <EdgeBar>
          <EdgeItem $h={48}><Copilot /></EdgeItem>
          <EdgeItem $h={53}><SearchIcon /></EdgeItem>
          <EdgeItem $h={49}><Tag /></EdgeItem>
          <EdgeItem $h={51}><M365 /></EdgeItem>
          <EdgeItem $h={50}><Outlook /></EdgeItem>
          <EdgeItem $h={15} />
          <EdgeRule />
          <EdgeItem $h={77}><Plus s={15} w={1.3} c="#ddd" /></EdgeItem>
          <EdgeSpacer />
          <EdgeRule />
          <EdgeItem $h={54}><Gear /></EdgeItem>
        </EdgeBar>
      </Body>
      <StatusBubble>127.0.0.1:4036/#tab-1987-4</StatusBubble>
    </Frame>
  );
}
